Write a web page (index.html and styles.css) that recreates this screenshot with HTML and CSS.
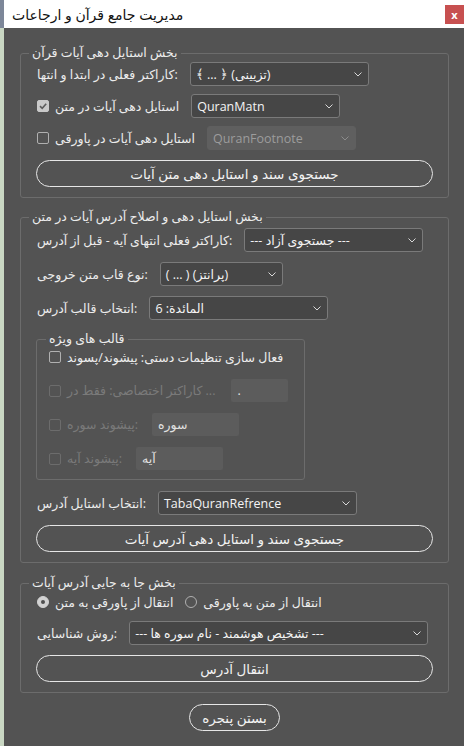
FILE: index.html
```html
<!DOCTYPE html>
<html lang="fa">
<head>
    <meta charset="UTF-8">
    <meta name="viewport" content="width=device-width, initial-scale=1.0">
    <title>مدیریت جامع قرآن و ارجاعات</title>
    <link rel="stylesheet" href="styles.css">
</head>
<body>

<div class="desk">
    <div class="strip"><div class="strip-top"></div></div>

    <div class="window">
        <div class="titlebar">
            <span class="title">مدیریت جامع قرآن و ارجاعات</span>
            <span class="close">x</span>
        </div>

        <div class="panel">

            <fieldset class="group">
                <legend>بخش استایل دهی آیات قرآن</legend>

                <div class="row first">
                    <span class="label">کاراکتر فعلی در ابتدا و انتها:</span>
                    <div class="combo combo-lg">
                        <span>﴾ ... ﴿ (تزیینی)</span>
                        <svg width="8" height="5" viewBox="0 0 8 5"><path d="M0.5 0.5 L4 4 L7.5 0.5" stroke="#d8d8d8" fill="none"/></svg>
                    </div>
                </div>

                <div class="row">
                    <span class="check on"><svg width="10" height="10" viewBox="0 0 10 10"><path d="M2 5.2 L4.2 7.3 L8.2 2.8" stroke="#5c5c5c" stroke-width="1.6" fill="none"/></svg></span>
                    <span class="label">استایل دهی آیات در متن</span>
                    <div class="combo combo-md">
                        <span>QuranMatn</span>
                        <svg width="8" height="5" viewBox="0 0 8 5"><path d="M0.5 0.5 L4 4 L7.5 0.5" stroke="#d8d8d8" fill="none"/></svg>
                    </div>
                </div>

                <div class="row">
                    <span class="check"></span>
                    <span class="label">استایل دهی آیات در پاورقی</span>
                    <div class="combo combo-md disabled">
                        <span>QuranFootnote</span>
                        <svg width="8" height="5" viewBox="0 0 8 5"><path d="M0.5 0.5 L4 4 L7.5 0.5" stroke="#8c8c8c" fill="none"/></svg>
                    </div>
                </div>

                <div class="btn-pill">جستجوی سند و استایل دهی متن آیات</div>
            </fieldset>

            <fieldset class="group">
                <legend>بخش استایل دهی و اصلاح آدرس آیات در متن</legend>

                <div class="row first-tight">
                    <span class="label">کاراکتر فعلی انتهای آیه - قبل از آدرس:</span>
                    <div class="combo combo-lg">
                        <span>--- جستجوی آزاد ---</span>
                        <svg width="8" height="5" viewBox="0 0 8 5"><path d="M0.5 0.5 L4 4 L7.5 0.5" stroke="#d8d8d8" fill="none"/></svg>
                    </div>
                </div>

                <div class="row loose">
                    <span class="label">نوع قاب متن خروجی:</span>
                    <div class="combo combo-sm">
                        <span>( ... ) (پرانتز)</span>
                        <svg width="8" height="5" viewBox="0 0 8 5"><path d="M0.5 0.5 L4 4 L7.5 0.5" stroke="#d8d8d8" fill="none"/></svg>
                    </div>
                </div>

                <div class="row loose">
                    <span class="label">انتخاب قالب آدرس:</span>
                    <div class="combo combo-lg">
                        <span>المائدة: 6</span>
                        <svg width="8" height="5" viewBox="0 0 8 5"><path d="M0.5 0.5 L4 4 L7.5 0.5" stroke="#d8d8d8" fill="none"/></svg>
                    </div>
                </div>

                <fieldset class="sub">
                    <legend>قالب های ویژه</legend>

                    <div class="row short">
                        <span class="check"></span>
                        <span>فعال سازی تنظیمات دستی: پیشوند/پسوند</span>
                    </div>

                    <div class="row field-row muted">
                        <span class="check"></span>
                        <span class="label wide">کاراکتر اختصاصی: فقط در ...</span>
                        <div class="field field-sm">.</div>
                    </div>

                    <div class="row field-row muted">
                        <span class="check"></span>
                        <span class="label">پیشوند سوره:</span>
                        <div class="field">سوره</div>
                    </div>

                    <div class="row field-row muted">
                        <span class="check"></span>
                        <span class="label">پیشوند آیه:</span>
                        <div class="field">آیه</div>
                    </div>
                </fieldset>

                <div class="row after-sub">
                    <span class="label">انتخاب استایل آدرس:</span>
                    <div class="combo combo-xl">
                        <span>TabaQuranRefrence</span>
                        <svg width="8" height="5" viewBox="0 0 8 5"><path d="M0.5 0.5 L4 4 L7.5 0.5" stroke="#d8d8d8" fill="none"/></svg>
                    </div>
                </div>

                <div class="btn-pill">جستجوی سند و استایل دهی آدرس آیات</div>
            </fieldset>

            <fieldset class="group last">
                <legend>بخش جا به جایی آدرس آیات</legend>

                <div class="row radios">
                    <span class="radio on"></span>
                    <span class="label">انتقال از پاورقی به متن</span>
                    <span class="radio"></span>
                    <span>انتقال از متن به پاورقی</span>
                </div>

                <div class="row loose">
                    <span class="label">روش شناسایی:</span>
                    <div class="combo combo-wide">
                        <span>--- تشخیص هوشمند - نام سوره ها ---</span>
                        <svg width="8" height="5" viewBox="0 0 8 5"><path d="M0.5 0.5 L4 4 L7.5 0.5" stroke="#d8d8d8" fill="none"/></svg>
                    </div>
                </div>

                <div class="btn-pill">انتقال آدرس</div>
            </fieldset>

            <div class="btn-pill btn-close">بستن پنجره</div>
        </div>
    </div>
</div>

</body>
</html>
```
FILE: styles.css
```css
body {
    margin: 0;
    background: #535353;
    font-family: "Open Sans", "DejaVu Sans", sans-serif;
    font-size: 12.5px;
    color: #ececec;
}

.desk {
    display: flex;
    min-height: 746px;
}

.strip {
    width: 4px;
    flex: none;
    background: #c9d7c3;
}

.strip-top {
    height: 28px;
    background: #7d8799;
}

.window {
    flex: 1;
}

.titlebar {
    height: 28px;
    background: #fff;
    display: flex;
    justify-content: space-between;
    align-items: center;
    padding-left: 8px;
}

.title {
    color: #111;
    font-size: 14px;
}

.close {
    align-self: flex-start;
    margin-top: 5px;
    width: 19px;
    height: 19px;
    background: #c75050;
    color: #fff;
    font-weight: bold;
    font-size: 11px;
    display: flex;
    align-items: center;
    justify-content: center;
}

.panel {
    padding: 17px 15px 0 16px;
}

fieldset {
    margin: 0;
    min-width: 0;
    border: 1px solid #6c6c6c;
    border-radius: 3px;
}

legend {
    line-height: 16px;
    padding: 0 3px;
}

.group {
    padding: 0 15px 10px 16px;
}

.group legend {
    margin-left: -8px;
}

.group + .group {
    margin-top: 11px;
}

.group.last {
    margin-top: 12px;
}

.row {
    display: flex;
    align-items: center;
    height: 24px;
    margin-top: 8px;
    white-space: nowrap;
}

.row.first {
    margin-top: 1px;
}

.row.first-tight {
    margin-top: 3px;
}

.row.loose {
    margin-top: 10px;
}

.row.after-sub {
    margin-top: 11px;
}

.row.radios {
    height: 18px;
    margin-top: 2px;
}

.label {
    margin-right: 12px;
}

.combo {
    box-sizing: border-box;
    height: 24px;
    border: 1px solid #7a7a7a;
    border-radius: 3px;
    background: #464646;
    color: #f4f4f4;
    display: flex;
    align-items: center;
    justify-content: space-between;
    padding: 0 6px 0 5px;
}

.combo.disabled {
    border-color: #5f5f5f;
    background: #5f5f5f;
    color: #9c9c9c;
}

.combo-sm { width: 123px; }
.combo-md { width: 149px; }
.combo-lg { width: 179px; }
.combo-xl { width: 199px; }
.combo-wide { width: 299px; }

.check {
    box-sizing: border-box;
    width: 12px;
    height: 12px;
    flex: none;
    border: 1px solid #b0b0b0;
    border-radius: 2px;
    margin-right: 6px;
    display: flex;
    align-items: center;
    justify-content: center;
}

.check.on {
    background: #c9c9c9;
    border-color: #c9c9c9;
}

.radio {
    box-sizing: border-box;
    width: 12px;
    height: 12px;
    flex: none;
    border: 1px solid #b0b0b0;
    border-radius: 50%;
    margin-right: 6px;
    display: flex;
    align-items: center;
    justify-content: center;
}

.radio.on {
    background: #d2d2d2;
    border-color: #d2d2d2;
}

.radio.on::after {
    content: "";
    width: 4px;
    height: 4px;
    border-radius: 50%;
    background: #505050;
}

.btn-pill {
    box-sizing: border-box;
    height: 27px;
    margin: 9px 0 0 -1px;
    border: 1px solid #e6e6e6;
    border-radius: 14px;
    display: flex;
    align-items: center;
    justify-content: center;
    color: #f2f2f2;
    font-size: 13.5px;
}

.group .row + .btn-pill,
.group .row.after-sub + .btn-pill {
    margin-top: 10px;
}

.btn-close {
    width: 91px;
    margin: 11px auto 0;
}

.sub {
    width: 269px;
    box-sizing: border-box;
    margin: 11px 0 0 -1px;
    padding: 0 12px 9px;
}

.sub legend {
    margin-left: -3px;
}

.row.short {
    height: 20px;
    margin-top: 0;
}

.row.field-row {
    height: 23px;
    margin-top: 11px;
}

.row.short + .field-row {
    margin-top: 12px;
}

.muted {
    color: #7a7a7a;
}

.muted .check {
    border-color: #6c6c6c;
}

.muted .label {
    margin-right: 14px;
}

.muted .label.wide {
    margin-right: 16px;
}

.field {
    box-sizing: border-box;
    width: 87px;
    height: 23px;
    padding: 0 6px;
    border-radius: 2px;
    background: #5c5c5c;
    color: #e2e2e2;
    display: flex;
    align-items: center;
}

.field-sm {
    width: 57px;
}
```
